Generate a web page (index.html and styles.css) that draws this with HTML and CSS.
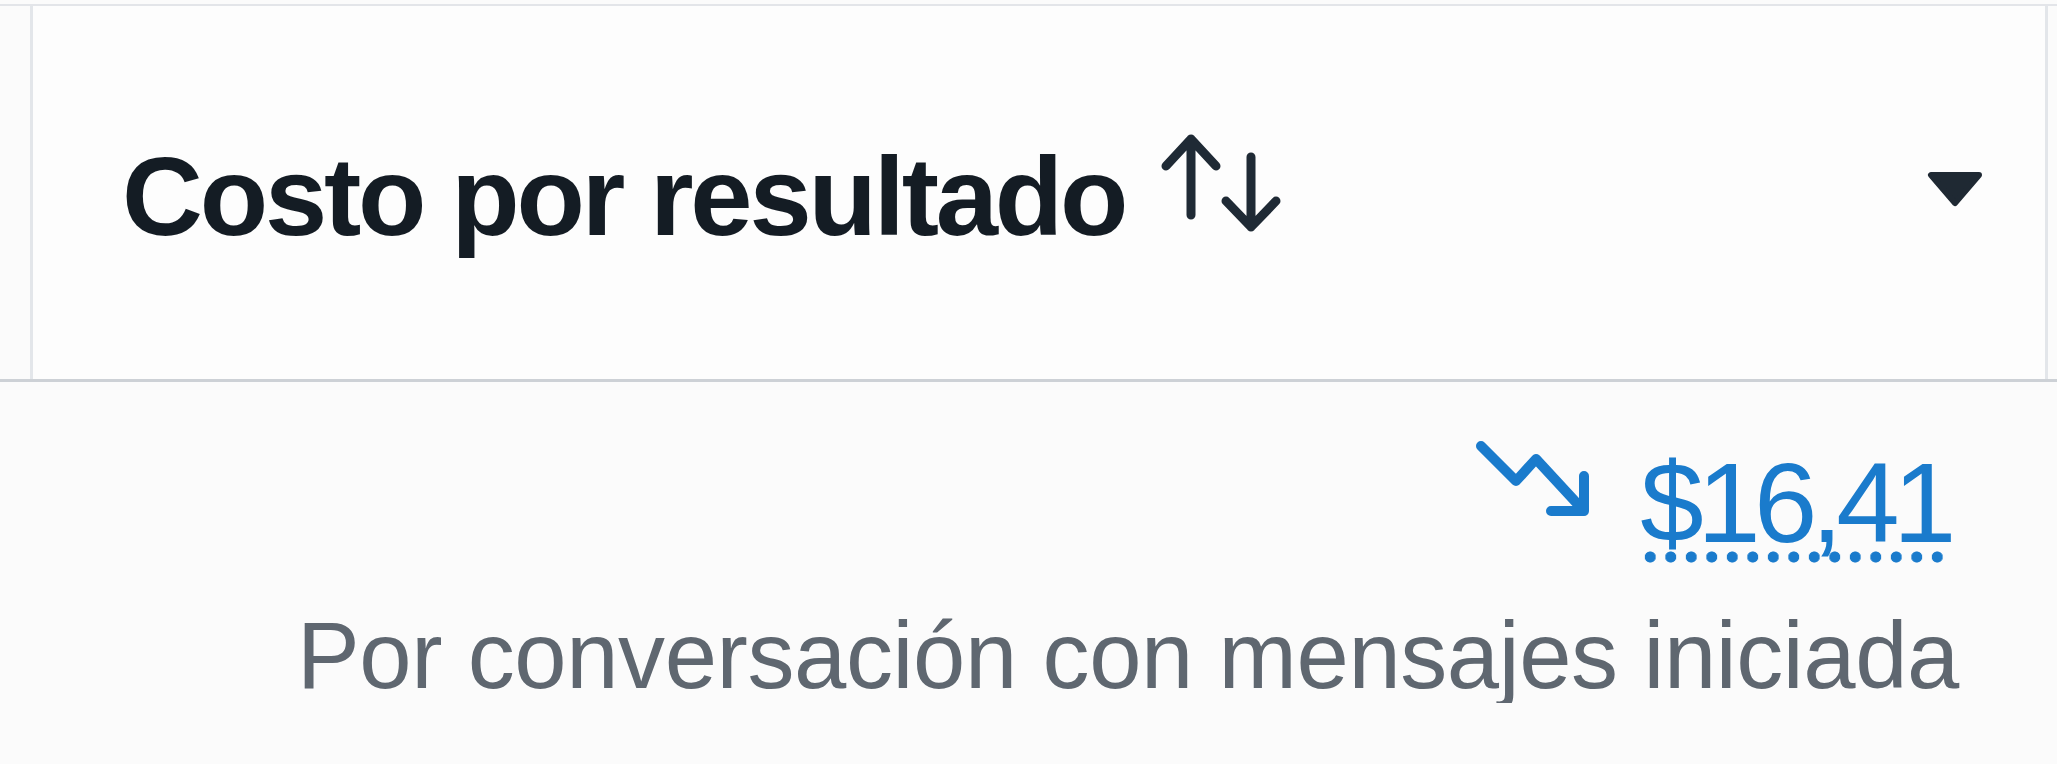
FILE: index.html
```html
<!DOCTYPE html>
<html lang="es">
<head>
  <meta charset="UTF-8" />
  <meta name="viewport" content="width=device-width, initial-scale=1.0" />
  <title>Costo por resultado</title>
  <link rel="stylesheet" href="styles.css">
</head>
<body>
<div class="table">
  <div class="head-row">
    <div class="gutter"></div>
    <div class="head-cell">
      <h2 class="title">Costo por resultado</h2>
      <svg class="sort-icon" width="122" height="102" viewBox="0 0 122 102">
        <path d="M6 32 L31 5 L56 32 M31 5 L31 81" />
        <path d="M91 23 L91 93 M66 67 L91 93 L116 67" />
      </svg>
      <svg class="caret" width="58" height="38" viewBox="0 0 58 38">
        <path d="M5 5 L53 5 L29 33 Z" />
      </svg>
    </div>
  </div>

  <div class="body-row">
    <div class="value">
      <svg class="trend-icon" width="124" height="90" viewBox="0 0 124 90">
        <path d="M10 15 L45 50 L65 28 L113 80 M113 45 L113 80 L80 80" />
      </svg>
      <span class="price">$16,41</span>
    </div>
    <div class="caption">Por conversación con mensajes iniciada</div>
  </div>
</div>
</body>
</html>
```

FILE: styles.css
```css
body {
  font-family: "Liberation Sans", Arial, sans-serif;
  background: #fbfbfb;
  margin: 0;
  padding: 0;
}
.table {
  margin-top: 4px;
  border-top: 2px solid #e3e5e9;
}
.head-row {
  display: flex;
  height: 373px;
  border-bottom: 3px solid #cdd1d6;
}
.gutter {
  width: 30px;
}
.head-cell {
  flex: 1;
  display: flex;
  align-items: center;
  margin-right: 9px;
  padding: 8px 61px 0 89px;
  background: #fdfdfd;
  border-left: 3px solid #e3e6ea;
  border-right: 3px solid #e3e6ea;
}
.title {
  margin: 0;
  font-size: 112px;
  font-weight: bold;
  line-height: 1;
  letter-spacing: -3.2px;
  color: #141c24;
}
.sort-icon {
  margin: 0 0 23px 35px;
  fill: none;
  stroke: #1f2a35;
  stroke-width: 9;
  stroke-linecap: round;
  stroke-linejoin: round;
}
.caret {
  margin: 0 0 15px auto;
  fill: #1f2933;
  stroke: #1f2933;
  stroke-width: 6;
  stroke-linejoin: round;
}
.body-row {
  display: flex;
  flex-direction: column;
  align-items: flex-end;
  padding: 49px 98px 0 0;
}
.value {
  display: flex;
  align-items: flex-start;
  margin-right: 9px;
}
.trend-icon {
  margin-right: 45px;
  fill: none;
  stroke: #1a7bcc;
  stroke-width: 10;
  stroke-linecap: round;
  stroke-linejoin: round;
}
.price {
  margin-top: 15px;
  padding-bottom: 3px;
  font-size: 114px;
  line-height: 1;
  letter-spacing: -6.5px;
  color: #1a7bcc;
  background: radial-gradient(circle, #1a7bcc 5.2px, transparent 5.9px) left bottom / 20.5px 12px repeat-x;
}
.caption {
  margin-top: 46px;
  font-size: 94px;
  line-height: 1;
  letter-spacing: -0.4px;
  color: #5f6770;
}
```
